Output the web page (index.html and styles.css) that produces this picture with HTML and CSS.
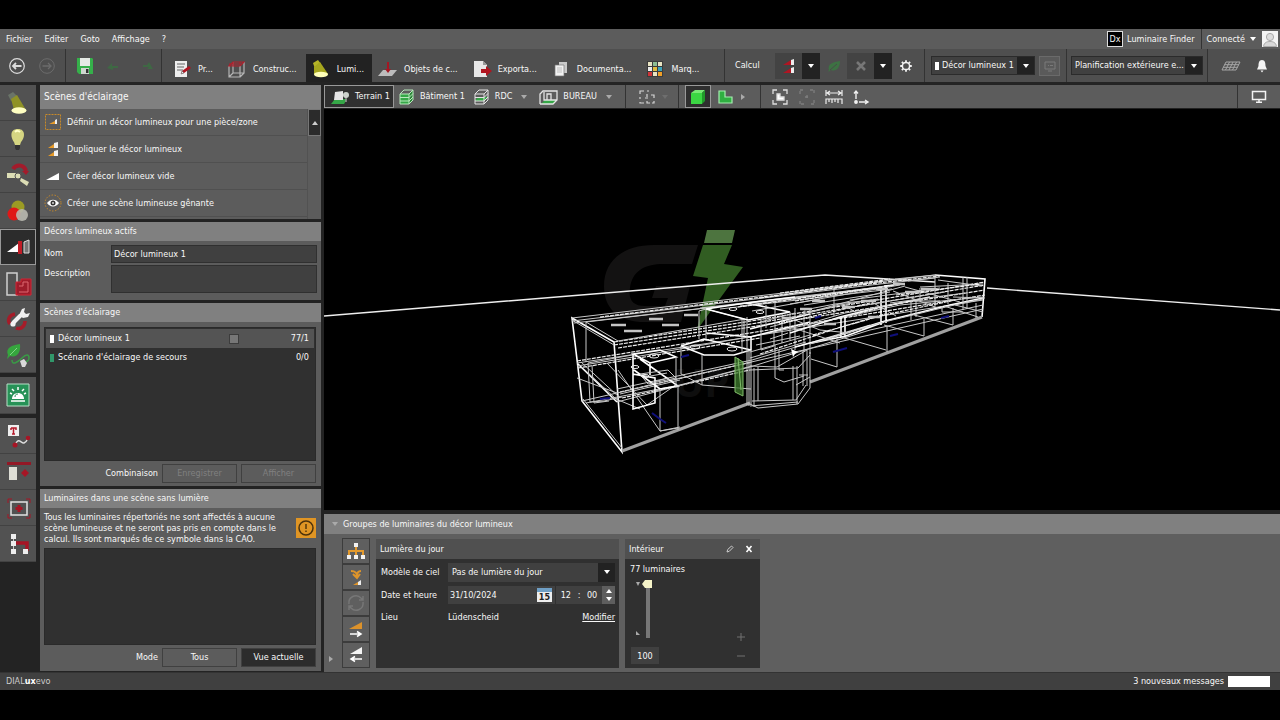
FILE: index.html
```html
<!DOCTYPE html>
<html lang="fr">
<head>
<meta charset="utf-8">
<title>DIALux evo</title>
<link rel="stylesheet" href="styles.css">
</head>
<body>
<div class="app">
<header class="menubar">
  <nav class="menus">
    <button>Fichier</button><button>Editer</button><button>Goto</button><button>Affichage</button><button>?</button>
  </nav>
  <div class="account">
    <button class="finder"><span class="dx">Dx</span>Luminaire Finder</button>
    <button class="user">Connecté <i class="down"></i></button>
    <svg class="avatar" width="16" height="16" viewBox="0 0 16 16"><rect width="16" height="16" fill="#f4f4f4"/><circle cx="8" cy="6" r="3.6" fill="#ddd" stroke="#aaa"/><path d="M1.500 15.500C2 11.500 5 10.500 8 10.500S14 11.500 14.500 15.500Z" fill="#d8d8d8" stroke="#aaa"/></svg>
  </div>
</header>

<div class="toolbar">
  <div class="group history">
    <button aria-label="Retour"><svg width="18" height="18" viewBox="0 0 18 18" fill="none" stroke="#ddd"><circle cx="9" cy="9" r="7.300" stroke-width="1.200"/><path d="M13.500 9H5M8 6L5 9l3 3" stroke-width="1.800"/></svg></button>
    <button aria-label="Suivant"><svg width="18" height="18" viewBox="0 0 18 18" fill="none" stroke="#6c6c6c"><circle cx="9" cy="9" r="7.300"/><path d="M4.500 9H13M10 6l3 3-3 3" stroke-width="1.300"/></svg></button>
  </div>
  <div class="group edit">
    <button aria-label="Enregistrer le projet"><svg width="18" height="18" viewBox="0 0 18 18"><path d="M1 1h15l1 1v15H3l-2-2Z" fill="#35b04a"/><path d="M4 1h10v8H4Z" fill="#e4e9e4"/><path d="M5 11h8v6H5Z" fill="#cfd6cf"/><path d="M10 12h2.500v4H10Z" fill="#333"/></svg></button>
    <button aria-label="Annuler"><svg width="14" height="12" viewBox="0 0 14 12"><path d="M1 8l5-5v3h6v2H7v2Z" fill="#3f6844"/></svg></button>
    <button aria-label="Rétablir"><svg width="14" height="12" viewBox="0 0 14 12"><path d="M3 5h4L9 2l4 7H7l2-2H3Z" fill="#3f6844"/></svg></button>
  </div>
  <nav class="tabs">
    <button><svg width="20" height="20" viewBox="0 0 20 20"><path d="M3 2h12v16H3Z" fill="#eee"/><path d="M5 5h8M5 8h7M5 11h6" stroke="#666"/><path d="M9 15l1-3 7-5 2 2-7 5Z" fill="#b01522"/><path d="M9 15l1-3 2 2Z" fill="#eee" stroke="#555" stroke-width=".5"/></svg>Pr...</button>
    <button><svg width="20" height="20" viewBox="0 0 20 20" fill="none"><path d="M2 7v11h11V7M6 3v11h11V3M2 18l4-4M13 18l4-4" stroke="#b5b5b5" stroke-width="1.200"/><path d="M2 7L6 3H17L13 7ZM6 3v4M2 5h11V3" stroke="#b0202c" stroke-width="1.200"/></svg>Construc...</button>
    <button class="active"><svg width="20" height="20" viewBox="0 0 20 20"><path d="M2 4l5-3 3 4-6 5Z" fill="#b5b428"/><path d="M3 8l6-5 8 12H3Z" fill="#a6a61e"/><ellipse cx="10" cy="15.500" rx="7" ry="2.700" fill="#ffffb8"/></svg>Lumi...</button>
    <button><svg width="20" height="20" viewBox="0 0 20 20"><path d="M5 11h14l-5 6H0Z" fill="#bcbcbc"/><path d="M10 3v9" stroke="#a51623" stroke-width="2"/><path d="M7 10l3 4 3-4Z" fill="#a51623"/></svg>Objets de c...</button>
    <button><svg width="20" height="20" viewBox="0 0 20 20"><path d="M2 2h9l4 4v12H2Z" fill="#e8e8e8"/><path d="M11 2v4h4" fill="#999"/><path d="M9 10h5V7l6 5-6 5v-3H9Z" fill="#b01520"/></svg>Exporta...</button>
    <button><svg width="20" height="20" viewBox="0 0 20 20"><path d="M8 3h8v11H8Z" fill="#c9c9c9"/><path d="M4 6h9v11H4Z" fill="#f1f1f1" stroke="#777" stroke-width=".7"/><path d="M6 9h5M6 11h5M6 13h5" stroke="#aaa" stroke-width=".7"/></svg>Documenta...</button>
    <button><svg width="20" height="20" viewBox="0 0 20 20"><path d="M2 2h16v16H2Z" fill="#3b3b3b"/><path d="M3 3h4v4H3ZM13 3h4v4h-4ZM8 13h4v4H8Z" fill="#e9e4c2"/><path d="M8 3h4v4H8Z" fill="#8dbd93"/><path d="M3 8h4v4H3Z" fill="#ebebeb"/><path d="M8 8h4v4H8Z" fill="#e1bd3e"/><path d="M13 8h4v4h-4Z" fill="#3da2b9"/><path d="M3 13h4v4H3Z" fill="#cf3438"/><path d="M13 13h4v4h-4Z" fill="#ef9f28"/></svg>Marq...</button>
  </nav>
  <div class="group calc">
    <span class="calc-label">Calcul</span>
    <button class="sq" aria-label="Lancer le calcul"><svg width="16" height="18" viewBox="0 0 16 18"><path d="M2 8l8-5v5ZM2 16l8-5v5Z" fill="#b01522"/><path d="M10 3l3-1v6h-3ZM10 11l3-1v6h-3Z" fill="#eee"/></svg></button>
    <button class="drop" aria-label="Options de calcul"><i class="down"></i></button>
    <button class="leaf" aria-label="Énergie"><svg width="14" height="14" viewBox="0 0 14 14"><path d="M2 11C0 5 6 3 13 2c0 7-4 11-9 9L1 13" fill="#3d7243"/><path d="M3 11l7-6" stroke="#4a4a4a"/></svg></button>
    <button class="sq" aria-label="Supprimer"><svg width="14" height="14" viewBox="0 0 14 14"><path d="M3 3l8 8M11 3l-8 8" stroke="#777" stroke-width="2.500"/></svg></button>
    <button class="drop" aria-label="Options de suppression"><i class="down"></i></button>
    <button class="gear" aria-label="Réglages"><svg width="14" height="14" viewBox="0 0 14 14" fill="none" stroke="#f2f2f2"><circle cx="7" cy="7" r="3.600" stroke-width="1.500"/><path d="M7 1.200v2M7 10.800v2M1.200 7h2M10.800 7h2M2.900 2.900l1.400 1.400M9.700 9.700l1.400 1.400M11.100 2.900L9.700 4.300M4.300 9.700l-1.400 1.400" stroke-width="1.800"/></svg></button>
  </div>
  <div class="group scene">
    <div class="pick"><i class="mark"></i><select aria-label="Décor lumineux"><option>Décor lumineux 1</option></select></div>
    <button class="view" aria-label="Vue du décor"><svg width="12" height="12" viewBox="0 0 12 12" fill="none" stroke="#7a7a7a"><path d="M1 2h10v7H1ZM4 11h4M4 5.500h1M6 5.500h3"/></svg></button>
  </div>
  <div class="group plan">
    <div class="pick"><select aria-label="Planification"><option>Planification extérieure e...</option></select></div>
  </div>
  <div class="group alerts">
    <button aria-label="Grille"><svg width="20" height="12" viewBox="0 0 20 12" fill="none" stroke="#a6a6a6"><path d="M5 2h14l-4 8H1ZM3.700 4.700H18M2.300 7.300H16.500M8.500 2l-4 8M12 2l-4 8M15.500 2l-4 8"/></svg></button>
    <button aria-label="Notifications"><svg width="12" height="14" viewBox="0 0 12 14"><path d="M6 1C3 1 2.500 4 2.500 7L1 10.500H11L9.500 7C9.500 4 9 1 6 1ZM4.500 11.500H7.500L6 13.500Z" fill="#f4f4f4"/></svg></button>
  </div>
</div>

<main class="main">
  <nav class="rail">
    <div class="rail-group">
      <button aria-label="Luminaires"><svg width="28" height="28" viewBox="0 0 28 28"><path d="M4 6l5-3 4 4-6 5Z" fill="#6a7468"/><path d="M7 10l6-4 9 15H10Z" fill="#8f9226"/><ellipse cx="15" cy="21.500" rx="7.500" ry="3.300" fill="#ffffc2"/></svg></button>
      <button aria-label="Lampes"><svg width="28" height="28" viewBox="0 0 28 28"><path d="M14 4c-9 0-7 9-4 13l1 3h5l1-3c4-4 5-13-3-13Z" fill="#d5d582"/><path d="M11 7c2-2 4-1 5 0" stroke="#ffffc8" stroke-width="2" fill="none"/><path d="M11 20h5v3l-1 2h-3l-1-2Z" fill="#343434"/></svg></button>
      <button aria-label="Orientation"><svg width="28" height="28" viewBox="0 0 28 28"><path d="M9 8c3-5 11-5 13 2" stroke="#a31b2b" stroke-width="4" fill="none"/><path d="M18 10h7l-3 4Z" fill="#a31b2b"/><path d="M3 12h9v5H3ZM17 17l8 4-2 4-7-5Z" fill="#dcddb5"/><circle cx="14" cy="15" r="3" fill="#dcddb5" stroke="#555"/></svg></button>
      <button aria-label="Couleurs"><svg width="28" height="28" viewBox="0 0 28 28"><circle cx="14" cy="10" r="6.500" fill="#9b9b24"/><circle cx="10" cy="17" r="6.500" fill="#e01717"/><circle cx="18" cy="18" r="6" fill="#b9b9b0" opacity=".9"/></svg></button>
      <button class="active" aria-label="Scènes"><svg width="28" height="28" viewBox="0 0 28 28"><path d="M3 19l12-9v9Z" fill="#fff"/><path d="M14 8h4v13h-4Z" fill="#c01d27"/><path d="M20 9l5-2v13h-5Z" fill="#777" stroke="#ddd"/></svg></button>
      <button aria-label="Surfaces de calcul"><svg width="28" height="28" viewBox="0 0 28 28"><path d="M3 4h10v22H3Z" fill="none" stroke="#d0d0d0" stroke-width="1.500"/><path d="M12 13h5v-3h10v16H12Z" fill="#9d1c2b" stroke="#d32232"/><path d="M15 17h4v-4h5v10h-9" fill="none" stroke="#dd6671"/></svg></button>
      <button aria-label="Facteur de maintenance"><svg width="28" height="28" viewBox="0 0 28 28"><path d="M11 9c-6 1-8 6-5 10M12 23c5 2 9-2 9-7" stroke="#a51c29" stroke-width="3.500" fill="none"/><path d="M9 18l8-8" stroke="#f1f1f1" stroke-width="4"/><path d="M16 8l2-4 3-1-1 4 2 2 4-1-2 4-5 1-3-2Z" fill="#f1f1f1"/><circle cx="9" cy="19" r="2.600" fill="#f1f1f1"/></svg></button>
      <button aria-label="Énergie"><svg width="28" height="28" viewBox="0 0 28 28"><path d="M4 14C1 7 8 4 16 3c1 9-3 14-10 12l-3 3" fill="#36a63e"/><path d="M6 14l7-7" stroke="#81d584"/><path d="M8 19c0 6 6 2 10-2s7-4 7 0c0 3-3 4-4 4" stroke="#3a9b46" stroke-width="1.500" fill="none"/><path d="M16 20l4-2 3 4-2 4h-3Z" fill="#d9d9d9"/></svg></button>
    </div>
    <div class="rail-group">
      <button aria-label="Éclairage de secours"><svg width="24" height="24" viewBox="0 0 24 24"><path d="M1 1h22v22H1Z" fill="#279257" stroke="#b9dfc8"/><path d="M6 16c0-8 12-8 12 0Z" fill="#fff"/><path d="M5 18h14M12 4v3M6 6l2 2M18 6l-2 2M4 10l2 1M20 10l-2 1" stroke="#fff" stroke-width="1.500"/><path d="M9 14c0-2 1-3 3-3" stroke="#279257" fill="none"/></svg></button>
    </div>
    <div class="rail-group">
      <button aria-label="Textes et lignes"><svg width="28" height="28" viewBox="0 0 28 28"><path d="M4 3h11v11H4Z" fill="#eee"/><path d="M7 6h5v2M7 8V6M9.500 6v6M8 12h3" stroke="#b51a2b" stroke-width="1.500" fill="none"/><path d="M11 23c4-9 6-1 9-2s3-3 4-5" stroke="#ddd" stroke-width="1.400" fill="none"/><circle cx="11" cy="23" r="2.500" fill="#a61525"/><circle cx="24" cy="16" r="2.300" fill="#a61525"/></svg></button>
      <button aria-label="Aligner"><svg width="28" height="28" viewBox="0 0 28 28"><path d="M3 4h24v3H3Z" fill="#931826"/><path d="M5 9h8v13H5Z" fill="#deded6"/><path d="M17 15l4-4 4 4-4 4Z" fill="#a61525"/></svg></button>
      <button aria-label="Centrer"><svg width="28" height="28" viewBox="0 0 28 28" fill="none"><path d="M4 9V5h4M22 5h4v4M26 20v4h-4M8 24H4v-4" stroke="#a61525"/><path d="M7 8h16v13H7Z" stroke="#e2e2e2" stroke-width="1.500"/><path d="M15 11v7M11.500 14.500h7" stroke="#a61525" stroke-width="3"/></svg></button>
      <button aria-label="Structure"><svg width="28" height="28" viewBox="0 0 28 28"><path d="M9 13h14v8" stroke="#a61525" stroke-width="3.500" fill="none"/><path d="M9.500 5v18" stroke="#ccc"/><path d="M7 4h5v5H7ZM7 11h5v5H7ZM7 19h5v5H7ZM19 19h5v5h-5Z" fill="#eee"/></svg></button>
    </div>
  </nav>

  <aside class="panel">
    <section class="block">
      <h1>Scènes d'éclairage</h1>
      <div class="action-area">
        <div class="actions">
          <button><svg width="18" height="18" viewBox="0 0 18 18"><path d="M1.500 1.500h15v15h-15Z" fill="none" stroke="#c98a28" stroke-dasharray="2 1"/><path d="M5 11l6-3v3Z" fill="#e69a28"/><path d="M11 7l2-1v5h-2Z" fill="#eee"/></svg>Définir un décor lumineux pour une pièce/zone</button>
          <button><svg width="18" height="18" viewBox="0 0 18 18"><path d="M4 8l6-4v4ZM4 16l6-4v4Z" fill="#e69a28"/><path d="M10 3l4-1v6h-4ZM10 11l4-1v6h-4Z" fill="#f1f1f1"/></svg>Dupliquer le décor lumineux</button>
          <button><svg width="18" height="18" viewBox="0 0 18 18"><path d="M2 13l13-7v7Z" fill="#fff"/></svg>Créer décor lumineux vide</button>
          <button><svg width="18" height="18" viewBox="0 0 18 18"><circle cx="9" cy="9" r="8" fill="none" stroke="#c98a28" stroke-dasharray="1.500 1.500"/><path d="M3 9c3-4.500 9-4.500 12 0-3 4.500-9 4.500-12 0Z" fill="#fff"/><circle cx="9" cy="9" r="2.500" fill="#333"/><circle cx="9" cy="9" r="1" fill="#ddd"/></svg>Créer une scène lumineuse gênante</button>
        </div>
        <div class="scroll"><button aria-label="Défiler vers le haut"><i class="up"></i></button></div>
      </div>
    </section>

    <section class="block">
      <h2>Décors lumineux actifs</h2>
      <div class="form">
        <label for="nom">Nom</label><input id="nom" type="text" value="Décor lumineux 1">
        <label for="desc">Description</label><textarea id="desc"></textarea>
      </div>
    </section>

    <section class="block grow">
      <h2>Scènes d'éclairage</h2>
      <div class="body">
        <ul class="list scenes">
          <li class="sel"><i class="mark"></i><span>Décor lumineux 1</span><input type="checkbox" aria-label="Combiner"><b>77/1</b></li>
          <li><i class="mark green"></i><span>Scénario d'éclairage de secours</span><b>0/0</b></li>
        </ul>
        <div class="buttons"><span>Combinaison</span><button disabled>Enregistrer</button><button disabled>Afficher</button></div>
      </div>
    </section>

    <section class="block grow">
      <h2>Luminaires dans une scène sans lumière</h2>
      <div class="body tight">
        <div class="note">
          <p>Tous les luminaires répertoriés ne sont affectés à aucune<br>scène lumineuse et ne seront pas pris en compte dans le<br>calcul. Ils sont marqués de ce symbole dans la CAO.</p>
          <svg width="20" height="20" viewBox="0 0 20 20"><path d="M0 0h20v20H0Z" fill="#e09524"/><circle cx="10" cy="10" r="7" fill="none" stroke="#4c320c" stroke-width="1.500"/><path d="M10 6v5M10 12.500v1.500" stroke="#4c320c" stroke-width="1.400"/></svg>
        </div>
        <div class="list"></div>
        <div class="buttons"><span>Mode</span><button>Tous</button><button class="on">Vue actuelle</button></div>
      </div>
    </section>
  </aside>

  <div class="work">
    <div class="viewbar">
      <div class="crumbs">
        <button class="active"><svg width="20" height="16" viewBox="0 0 20 16"><path d="M4 10h12l-3 5H0Z" fill="#35a747"/><path d="M4 3l8-1v9H3Z" fill="#e5e5e5"/><path d="M15 7v6" stroke="#999" stroke-width="1.500"/><circle cx="15" cy="6" r="3" fill="#ccd1cc"/></svg>Terrain 1</button>
        <button><svg width="18" height="16" viewBox="0 0 18 16"><path d="M2 5h9v10H2Z" fill="#35a747"/><path d="M11 5l4-4v10l-4 4Z" fill="#2b8538"/><path d="M2 5l4-4h9l-4 4ZM2 8.500h9l4-4M2 12h9l4-4M2 5v10h9l4-4V1M11 5v10" stroke="#b9e8bd" fill="none"/></svg>Bâtiment 1</button>
        <button><svg width="18" height="16" viewBox="0 0 18 16" fill="none"><path d="M2 11l4-3h9l-4 4H2Z" fill="#35a747"/><path d="M2 5l4-4h9l-4 4ZM2 8.500h9l4-4M2 12h9l4-4M2 5v10h9l4-4V1M11 5v10" stroke="#e4e4e4"/></svg>RDC <i class="down dim"></i></button>
        <button><svg width="20" height="16" viewBox="0 0 20 16"><path d="M2 15l4-4h12l-4 4Z" fill="#35a747"/><path d="M1 15V5l3-3h14v9l-4 4H1M5 3v8h13M8 11V5h4v6" stroke="#e4e4e4" stroke-width="1.300" fill="none"/></svg>BUREAU <i class="down dim"></i></button>
      </div>
      <div class="group marquee"><button aria-label="Sélection"><svg width="18" height="16" viewBox="0 0 18 16" fill="none" stroke="#d5d5d5" stroke-width="1.200"><path d="M2 5V2h4M9 2h2M2 8v2M2 13v1h4M16 9V6h-3M9 5v3M7 9h3M9 12v2h3M14 14h2v-2"/></svg></button><i class="down faint"></i></div>
      <div class="group solids">
        <button class="active" aria-label="Vue 3D"><svg width="18" height="16" viewBox="0 0 18 16"><path d="M2 4l4-3h10l-3 3Z" fill="#79e875"/><path d="M2 4h11v11H2Z" fill="#3bd643"/><path d="M13 4l3-3v11l-3 3Z" fill="#209b2a"/></svg></button>
        <button aria-label="Plan"><svg width="18" height="16" viewBox="0 0 18 16"><path d="M2 2h6v6h7v6H2Z" fill="#2faf41" stroke="#a5eeb0" stroke-width="1.200"/></svg></button>
        <i class="right"></i>
      </div>
      <div class="group tools">
        <button aria-label="Zoom étendu"><svg width="18" height="16" viewBox="0 0 18 16" fill="none" stroke="#dedede" stroke-width="1.300"><path d="M2 5V1h4M12 1h4v4M16 11v4h-4M6 15H2v-4"/><path d="M6 5h3v3h4v3H6Z" fill="#fff"/></svg></button>
        <button aria-label="Zoom sélection"><svg width="18" height="16" viewBox="0 0 18 16" fill="none" stroke="#7e7e7e" stroke-width="1.300"><path d="M2 5V1h4M12 1h4v4M16 11v4h-4M6 15H2v-4M7 8h4M9 6v4" stroke-dasharray="3 1"/></svg></button>
        <button aria-label="Mesurer"><svg width="18" height="16" viewBox="0 0 18 16" fill="none" stroke="#ededed" stroke-width="1.200"><path d="M1 1v6M17 1v6M2 4h14M5 2L2 4l3 2M13 2l3 2-3 2M1 15V10h16v5M4 10v3M7 10v4M10 10v3M13 10v4"/></svg></button>
        <button aria-label="Axes"><svg width="18" height="16" viewBox="0 0 18 16" fill="none" stroke="#f0f0f0" stroke-width="1.400"><path d="M4 10V2M2 4.500L4 2l2 2.500M7 13h9M13 11l3 2-3 2"/><circle cx="4" cy="13" r="1.200" fill="#fff"/></svg></button>
      </div>
      <div class="group screen"><button aria-label="Affichage"><svg width="16" height="14" viewBox="0 0 16 14" fill="none" stroke="#f2f2f2" stroke-width="1.500"><path d="M1.500 1.500h13v8h-13ZM5 12.300h6M8 10v2"/></svg></button></div>
    </div>

    <div class="viewport">
      <svg class="scene3d" viewBox="324 109 956 401" preserveAspectRatio="xMidYMid slice" role="img" aria-label="Vue 3D du bâtiment">
        <g class="logo">
          <path d="M698 245H654C624 245 604 260 604 286C604 307 616 320 640 322H681L690 286H656L652 298H668L665 306H645C633 306 628 300 630 288C632 272 643 265 660 264H692Z" fill="#131212"/>
          <path d="M707 230H735L732 243H704Z" fill="#4d743f"/>
          <path d="M703 245H732L724 264L743 267L697 330L708 278L693 276Z" fill="#315d22"/>
          <text x="674" y="397" class="logo-text">UP</text>
        </g>
        <g class="ground"><path d="M324 316L825 275L935 282M987 288L1280 310"/></g>
        <g class="wire">
          <path class="hot" d="M935 275L985 279L982 317M572 318L614 342L622 452L582 401ZM577 363L617 402"/>
          <path class="base" d="M622 451L750 403M810 382L982 317"/>
          <path d="M572 318L935 275M572 321L880 284L935 278M574 323L880 288M586 322L860 290M700 308L890 286M720 309L892 289M572 320L614 345M583 399L622 448"/>
          <path class="dash" d="M600 317L860 285L940 276M614 342L745 322L985 282M614 345L745 325L985 285M618 348L985 290M577 361L985 295M578 368L760 338M620 392L752 362M622 398L750 370"/>
          <path d="M586 322L618 341L745 319M577 363L750 337L900 305L983 297M577 366L640 356L760 335L983 300M617 402L750 367L870 330L983 305M581 362L620 398M588 363L590 402L604 401L622 397M588 363L632 355M582 401L617 393L677 379L760 360L983 309M586 403L680 385L752 366M617 389L752 360L870 325M620 394L680 380"/>
          <path d="M586 322V362M592 365L594 403L609 401M584 369L616 399L640 409M577 378L617 393M618 370L660 431L680 427M607 363L647 405L677 384"/>
          <path class="hot" d="M633 354L633 409L655 403V378L633 374ZM633 354L660 350L676 357L650 363ZM650 363V375M640 359L678 386L660 389L634 370"/>
          <path d="M676 357V388M660 389V431L678 428M678 385V430M640 374L668 370L676 378L648 384ZM645 377L667 373M654 382L668 378"/>
          <path class="hot" d="M681 346L704 339L751 350M681 346L704 355H734L751 350V337L706 333"/>
          <path d="M681 346V374L702 385L751 389M702 355V385M751 350V405M699 311L706 309L744 319V336M699 311V339M706 309V339M742 318V353M747 317V405M749 350V406"/>
          <path d="M750 366L777 367L807 350M754 368V407M758 367V401M750 404L758 408L798 404L810 388V352M752 401L796 400L806 385M793 366V400M797 366V404M803 350V386M807 350V386M750 370L798 368L810 355M775 345V378L784 382L804 376M779 350V370H784M750 406L798 402M796 385l14-8M799 375h9"/>
          <path class="hot" d="M706 309L746 303L790 312L748 320ZM746 303L795 297M750 329L810 314M750 337L810 322"/>
          <path d="M790 312V340M795 308V350M760 322L795 313M810 310V354M804 311V352M761 318V350L774 346V331M770 327L796 320M766 305V328M775 303V330M782 314V343M788 333L770 339M752 311L820 299M740 306L885 286M790 304L900 285M799 315L905 286M808 313L840 305L878 299M750 352L810 335M750 358L806 342M756 345L800 336"/>
          <path class="hot" d="M795 347L840 335L885 321L950 305L983 298M790 333L840 317L880 307L930 297M812 343L846 336L884 322M841 317V338M845 317V336M881 287V325M886 285V323M884 286L894 285"/>
          <path d="M834 289V316M911 301V320M916 301V317M920 288V300M911 301L940 301M810 344L880 323L950 306L983 299M837 339V367M887 326V352M924 319V336M953 308V325M976 303V318M841 337L886 350M884 325L924 336M914 315L953 325M944 306L978 317M837 367L811 359M795 320L820 330L850 333M790 327L840 343M844 305L860 315M870 301L896 316M893 291L935 307M905 287L960 302"/>
          <path d="M935 275V308M948 283V304M963 277V310M967 277V309M895 279L935 275M920 287L983 284M908 281L940 277M953 297L985 298M942 306V312H963M955 305L983 312M938 280L982 286M804 310L835 304L872 300M811 323L845 313L880 307L906 302M850 300L940 288M860 306L945 292M804 305L890 292M890 303L965 293"/>
          <path class="dash" d="M760 298L884 281M738 307L880 287M795 301L900 284M779 324L870 303M760 354L841 327L885 314M813 335L884 315L955 300M896 295L980 284M780 293L890 279M830 320L900 303"/>
        </g>
        <g class="lamps"><path d="M611 325h15M649 319h14M684 315h14M624 331h18M662 325h17M782 318h10M800 309h12M812 301h13M824 324h12M842 307h13M861 301h15M868 317h12M876 289h12M893 284h12M905 292h14M921 289h15"/></g>
        <g class="rings"><ellipse cx="654" cy="356" rx="5" ry="2"/><ellipse cx="695" cy="347" rx="5" ry="2"/><ellipse cx="732" cy="349" rx="5" ry="2"/><ellipse cx="733" cy="309" rx="4" ry="1.500"/><ellipse cx="760" cy="312" rx="4" ry="1.500"/><ellipse cx="635" cy="367" rx="4" ry="1.500"/><ellipse cx="645" cy="376" rx="4" ry="1.500"/></g>
        <path d="M735 357L743 362V396L735 392Z" fill="#3f7c2d" opacity=".75"/>
        <path d="M735 357L743 362V396L735 392ZM738 358L741 390" fill="none" stroke="#80bd6a"/>
        <path d="M652 413l8 6 6 4M600 399l10-1M681 357l8-2M833 352l14-4M890 336l8-2M941 318l8-2M815 318l6-2" stroke="#10107c" stroke-width="2" fill="none"/>
        <path d="M791 349l7 3-3 2-2 3Z" fill="#fff"/>
      </svg>
    </div>

    <section class="dock">
      <h2><i class="down dim"></i>Groupes de luminaires du décor lumineux</h2>
      <div class="dock-body">
        <div class="collapse"><i class="right"></i></div>
        <div class="stack">
          <button aria-label="Hiérarchie"><svg width="20" height="20" viewBox="0 0 20 20"><path d="M10 5v6M3 14v-4h14v4M10 10v4" stroke="#e39a2d" stroke-width="2" fill="none"/><path d="M8 2h4v4H8ZM1 14h4v4H1ZM8 14h4v4H8ZM15 14h4v4h-4Z" fill="#f2f2f2"/></svg></button>
          <button aria-label="Affecter"><svg width="20" height="20" viewBox="0 0 20 20"><path d="M5 4c5 0 6 2 6 6M15 4c-4 0-4 3-4 5M7 7l4 4 3-4" stroke="#dd942b" stroke-width="2" fill="none"/><path d="M7 18l5-3v3Z" fill="#dd942b"/><path d="M12 15l3-2v5h-3Z" fill="#eee"/></svg></button>
          <button disabled aria-label="Actualiser"><svg width="20" height="20" viewBox="0 0 20 20" fill="none" stroke="#777" stroke-width="1.500"><path d="M3 11a7 7 0 0 1 12-6l2 2M17 3v4h-4M17 9a7 7 0 0 1-12 6l-2-2M3 17v-4h4"/></svg></button>
          <button aria-label="Exporter les valeurs"><svg width="20" height="20" viewBox="0 0 20 20"><path d="M3 10l13-7v7Z" fill="#dc922b"/><path d="M4 15h10M11 12.500l4 2.500-4 2.500" stroke="#fff" stroke-width="1.500" fill="none"/></svg></button>
          <button aria-label="Importer les valeurs"><svg width="20" height="20" viewBox="0 0 20 20"><path d="M4 9l12-7v7Z" fill="#f5f5f5"/><path d="M16 14H6M9 11.500L5 14l4 2.500" stroke="#fff" stroke-width="1.500" fill="none"/></svg></button>
        </div>
        <div class="card daylight">
          <h3>Lumière du jour</h3>
          <div class="fields">
            <label for="sky">Modèle de ciel</label>
            <div class="pick dark"><select id="sky"><option>Pas de lumière du jour</option></select></div>
            <label for="date">Date et heure</label>
            <div class="when">
              <div class="date"><input id="date" type="text" value="31/10/2024"><span class="cal">15</span></div>
              <div class="time"><input type="text" value="12" aria-label="Heures">:<input type="text" value="00" aria-label="Minutes"></div>
              <div class="spin"><button aria-label="Plus tard"><i class="up"></i></button><button aria-label="Plus tôt"><i class="down"></i></button></div>
            </div>
            <span>Lieu</span>
            <div class="place"><span>Lüdenscheid</span><a href="#">Modifier</a></div>
          </div>
        </div>
        <div class="card interior">
          <h3>Intérieur <span class="icons"><button aria-label="Modifier le groupe"><svg width="8" height="8" viewBox="0 0 8 8"><path d="M1 7l.7-2.500L5.500 1 7 2.500 3.300 6.300Z" fill="none" stroke="#ccc"/></svg></button><button aria-label="Supprimer le groupe"><svg width="8" height="8" viewBox="0 0 8 8"><path d="M1.500 1l5 6M6.500 1l-5 6" stroke="#fff" stroke-width="1.600"/></svg></button></span></h3>
          <p>77 luminaires</p>
          <div class="dimmer">
            <svg width="5" height="54" viewBox="0 0 5 54"><path d="M0 0h4L2 4ZM0 49l4 4H0Z" fill="#aaa"/></svg>
            <input type="range" min="0" max="100" value="100" aria-label="Intensité">
          </div>
          <div class="level"><input type="text" value="100" aria-label="Valeur"><div class="pm"><button aria-label="Augmenter"><svg width="10" height="10" viewBox="0 0 10 10"><path d="M1 5h8M5 1v8" stroke="#707070"/></svg></button><button aria-label="Diminuer"><svg width="10" height="10" viewBox="0 0 10 10"><path d="M1 5h8" stroke="#707070"/></svg></button></div></div>
        </div>
      </div>
    </section>
  </div>
</main>

<footer class="status"><span class="brand">DIAL<strong>ux</strong>evo</span><span class="msgs">3 nouveaux messages <i></i></span></footer>
</div>
</body>
</html>
```
FILE: styles.css
```css
* { box-sizing: border-box; }
body { margin: 0; background: #000; color: #f8f8f8; font: 9px/11px "DejaVu Sans Condensed", "Open Sans", sans-serif; }
button, input, select, textarea { font: inherit; color: inherit; margin: 0; border: 0; padding: 0; background: none; border-radius: 0; outline: 0; }
h1, h2, h3, p, ul { margin: 0; padding: 0; font-weight: normal; font-size: 9px; }
svg { display: block; flex: none; }
button { display: flex; align-items: center; justify-content: center; white-space: nowrap; }

.app { min-height: 100vh; padding: 29px 0 30px; display: flex; flex-direction: column; }

/* small arrow glyphs */
.down, .up, .right { flex: none; width: 0; height: 0; border: 3px solid transparent; }
.down { border-top: 4px solid #fff; border-bottom: 0; }
.up { border-bottom: 4px solid #ccc; border-top: 0; }
.right { border-left: 4px solid #aaa; border-right: 0; }
.down.dim { border-top-color: #aaa; }
.down.faint { border-top-color: #6e6e6e; }
.mark { flex: none; width: 4px; height: 8px; background: #fff; }
.mark.green { background: #31976a; }

.menubar { height: 20px; background: #5c5c5c; display: flex; justify-content: space-between; }
.menus { display: flex; gap: 12px; padding-left: 6px; }
.account { display: flex; align-items: center; gap: 6px; padding-right: 2px; }
.finder { gap: 4px; }
.dx { width: 16px; height: 16px; border: 1px solid #ddd; background: #000; line-height: 14px; }
.user { height: 20px; gap: 5px; border-left: 1px solid #333; padding-left: 5px; }

.toolbar { height: 35px; background: #4f4f4f; border-bottom: 2px solid #242424; display: flex; }
.group { display: flex; align-items: center; border-left: 1px solid #333; }
.history { border: 0; padding: 0 9px 0 8px; gap: 12px; }
.edit { padding: 0 7px 0 10px; gap: 12px; }
.edit button:nth-child(2) { margin-right: 8px; }
.tabs { flex: 1; display: flex; gap: 1px; border-left: 1px solid #333; padding: 5px 0 0 5px; }
.tabs button { gap: 6px; padding: 2px 8px 0 5px; }
.tabs .active { background: #222; }
.calc { padding-left: 10px; }
.calc-label { width: 40px; }
.sq { width: 27px; height: 26px; background: #434343; }
.drop { width: 18px; height: 26px; background: #222; }
.leaf { width: 27px; }
.gear { width: 27px; margin-right: 5px; }
.scene { padding: 0 6px; gap: 4px; }
.plan { padding: 0 4px; }
.view { width: 21px; height: 20px; background: #5a5a5a; border: 1px solid #6a6a6a; }
.alerts { padding: 0 12px 0 13px; gap: 15px; }
.pick { position: relative; display: flex; align-items: center; height: 19px; background: #404040; border: 1px solid #2b2b2b; padding-left: 3px; }
.pick select { appearance: none; height: 17px; padding-right: 17px; padding-left: 3px; }
.scene .pick select { width: 95px; }
.plan .pick select { width: 127px; padding-left: 0; }
.pick::after { content: ""; position: absolute; right: 0; top: 0; bottom: 0; width: 17px; background: #222; pointer-events: none; clip-path: polygon(0 0, 100% 0, 100% 100%, 0 100%, 0 0, 6px 7px, 9px 11px, 12px 7px, 6px 7px); }
.pick::before { content: ""; position: absolute; right: 5px; top: 6px; width: 8px; height: 6px; background: #fff; }

.main { flex: 1; display: flex; background: #232323; padding-top: 1px; min-height: 0; }
.rail { width: 36px; display: flex; flex-direction: column; gap: 4px; }
.rail-group { background: #525252; }
.rail button { width: 36px; height: 36px; border-bottom: 1px solid #424242; }
.rail-group:nth-child(2) button { height: 37px; }
.rail .active { background: #2c2c2c; border: 1px solid #999; }

.panel { width: 281px; margin-left: 4px; display: flex; flex-direction: column; gap: 3px; padding-bottom: 1px; }
.block { background: #5c5c5c; display: flex; flex-direction: column; }
.panel h1 { background: #808080; font-size: 10px; line-height: 24px; height: 24px; padding-left: 4px; }
.panel h2 { background: #808080; line-height: 19px; height: 19px; padding-left: 4px; }
.action-area { display: flex; }
.actions { flex: 1; padding-bottom: 2px; }
.actions button { width: 100%; height: 27px; justify-content: flex-start; gap: 5px; padding-left: 4px; border-bottom: 1px solid #505050; }
.scroll { width: 14px; border-left: 1px solid #525252; }
.scroll button { width: 13px; height: 27px; background: #2b2b2b; border: 1px solid #777; }
.form { display: grid; grid-template-columns: 67px 1fr; padding: 4px 4px 7px; row-gap: 2px; }
.form label { line-height: 17px; }
.form input { height: 18px; background: #404040; border: 1px solid #303030; padding-left: 2px; width: 100%; }
.form textarea { height: 28px; background: #404040; border: 1px solid #303030; resize: none; display: block; width: 100%; }
.grow { flex: 1 1 150px; }
.body { flex: 1; display: flex; flex-direction: column; padding: 5px 4px 3px; }
.body.tight { padding-top: 4px; }
.list { flex: 1; background: #303030; list-style: none; padding: 1px; margin-right: 1px; border: 1px solid #2a2a2a; }
.list li { display: flex; align-items: center; height: 19px; padding: 0 5px 0 4px; gap: 4px; }
.list span { flex: 1; }
.list b { font-weight: normal; }
.list .sel { background: #545454; }
.list input { appearance: none; width: 10px; height: 10px; background: #777; border: 1px solid #3c3c3c; margin-right: 48px; }
.buttons { display: grid; grid-template-columns: 1fr 75px 75px; column-gap: 4px; align-items: center; padding: 3px 1px 0 0; text-align: right; }
.buttons button { height: 19px; border: 1px solid #404040; }
.buttons button:disabled { color: #808080; }
.buttons .on { background: #2c2c2c; }
.note { display: flex; justify-content: space-between; align-items: center; padding: 0 1px 3px 0; white-space: nowrap; }
.tight .buttons { padding-bottom: 1px; }

.work { flex: 1; min-width: 0; margin-left: 3px; display: flex; flex-direction: column; }
.viewbar { height: 24px; background: #5c5c5c; display: flex; border-bottom: 1px solid #222; }
.crumbs { display: flex; margin-right: 9px; }
.crumbs button { gap: 4px; padding: 0 4px; }
.crumbs .active { background: #303030; border: 1px solid #999; padding: 0 3px 0 6px; }
.crumbs .down { margin-left: 5px; }
.crumbs button:nth-child(3) { padding-right: 8px; }
.marquee { padding: 0 10px 0 12px; gap: 6px; }
.solids { padding-left: 6px; gap: 2px; padding-right: 15px; }
.solids button { width: 26px; height: 23px; }
.solids .active { background: #2f2f2f; border: 1px solid #999; }
.tools { flex: 1; padding-left: 10px; gap: 9px; }
.screen { width: 43px; justify-content: center; }
.viewport { flex: 1; min-height: 0; background: #000; overflow: hidden; display: grid; }
.scene3d { width: 100%; height: 100%; min-height: 0; }
.ground, .wire, .lamps, .rings { fill: none; stroke: #eee; }
.wire { stroke-width: 1; stroke: #c8c8c8; }
.wire .hot { stroke-width: 1.6; stroke: #fff; }
.wire .base { stroke-width: 3; stroke: #a0a0a0; }
.wire .dash { stroke-dasharray: 4 1; stroke-width: 1.2; stroke: #eee; }
.ground { stroke-width: 1.4; }
.lamps { stroke-width: 2.5; stroke: #c4c4c4; }
.logo-text { font: bold 40px "Open Sans", sans-serif; fill: #0e0e0e; }

.dock { border-top: 4px solid #232323; background: #5f5f5f; flex: none; }
.dock h2 { height: 20px; line-height: 20px; background: #808080; display: flex; align-items: center; gap: 5px; padding-left: 8px; }
.dock-body { display: flex; gap: 6px; padding: 4px 0 4px 5px; height: 138px; }
.collapse { width: 7px; display: flex; align-items: flex-end; padding-bottom: 6px; }
.stack { width: 28px; display: flex; flex-direction: column; justify-content: space-between; }
.stack button { height: 26px; border: 1px solid #3c3c3c; }
.card { background: #303030; border-top: 1px solid #5f5f5f; }
.card h3 { height: 20px; line-height: 20px; background: #505050; padding: 0 4px; display: flex; align-items: center; justify-content: space-between; }
.daylight { width: 243px; }
.interior { width: 135px; display: flex; flex-direction: column; }
.fields { display: grid; grid-template-columns: 67px 1fr; padding: 4px 4px 0 5px; row-gap: 4px; align-items: center; }
.pick.dark { height: 19px; border: 0; background: #404040; padding-left: 1px; }
.dark select { width: 100%; }
.when { display: flex; background: #404040; height: 18px; }
.date { flex: 1; display: flex; align-items: center; justify-content: space-between; padding: 0 3px 0 2px; border-right: 1px solid #303030; }
.date input { width: 70px; }
.cal { width: 15px; height: 14px; background: #eee; border-top: 4px solid #6f9fc5; color: #222; text-align: center; line-height: 10px; font-weight: bold; }
.time { width: 46px; display: flex; align-items: center; justify-content: space-around; }
.time input { width: 16px; text-align: center; }
.spin { width: 13px; background: #5e5e5e; display: flex; flex-direction: column; justify-content: space-evenly; }
.spin .up { border-bottom-color: #fff; }
.place { display: flex; justify-content: space-between; line-height: 18px; }
.place a { color: inherit; }
.icons { display: flex; gap: 11px; padding-right: 3px; }
.interior p { padding: 5px; }
.dimmer { display: flex; padding-left: 11px; height: 58px; align-items: center; }
.dimmer input { appearance: none; writing-mode: vertical-lr; direction: rtl; width: 14px; height: 58px; }
.dimmer input::-webkit-slider-runnable-track { width: 4px; background: #777; height: 100%; }
.dimmer input::-webkit-slider-thumb { appearance: none; width: 10px; height: 8px; margin-left: -4px; background: #f5f3c8; clip-path: polygon(3px 0, 100% 0, 100% 100%, 3px 100%, 0 50%); }
.level { display: flex; justify-content: space-between; align-items: flex-end; flex: 1; padding: 0 14px 4px 6px; }
.level input { width: 28px; height: 17px; background: #404040; text-align: center; }
.pm { display: flex; flex-direction: column; gap: 9px; margin-top: -18px; margin-bottom: 3px; }

.status { height: 18px; background: #404040; border-top: 1px solid #333; display: flex; align-items: center; justify-content: space-between; padding: 0 10px 0 6px; }
.brand { color: #ccc; }
.brand strong { color: #fff; }
.msgs { display: flex; align-items: center; gap: 4px; }
.msgs i { width: 42px; height: 11px; background: #fff; }
```
